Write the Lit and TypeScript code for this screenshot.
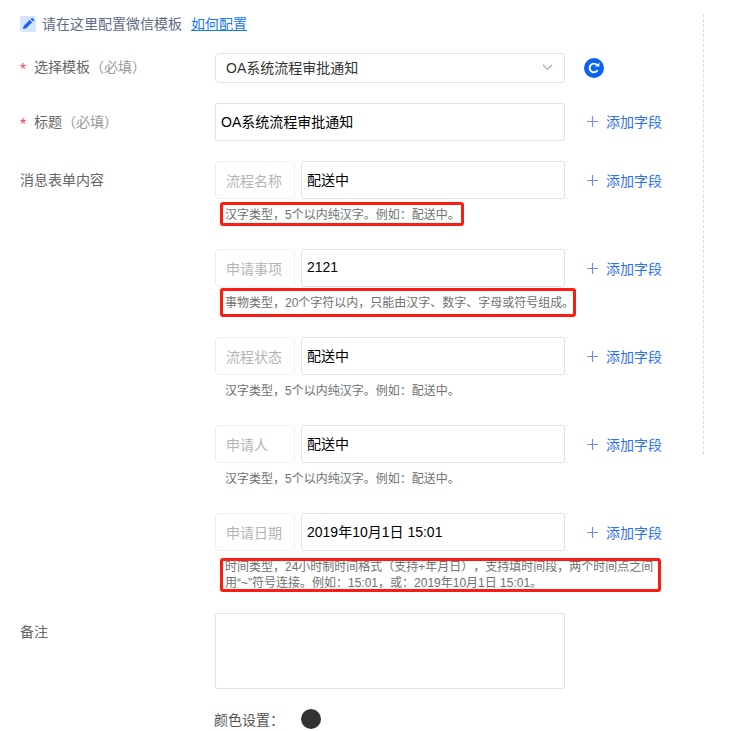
import { LitElement, html, css, svg } from "lit";
import { customElement } from "lit/decorators.js";

const HAN = "汉字类型，5个以内纯汉字。例如：配送中。";

const fields = [
  { name: "流程名称", value: "配送中", hint: HAN, mark: true },
  { name: "申请事项", value: "2121", hint: "事物类型，20个字符以内，只能由汉字、数字、字母或符号组成。", mark: true },
  { name: "流程状态", value: "配送中", hint: HAN, mark: false },
  { name: "申请人", value: "配送中", hint: HAN, mark: false },
  {
    name: "申请日期",
    value: "2019年10月1日 15:01",
    hint: "时间类型，24小时制时间格式（支持+年月日），支持填时间段，两个时间点之间用“~”符号连接。例如：15:01，或：2019年10月1日 15:01。",
    mark: true,
  },
];

@customElement("app-root")
export class AppRoot extends LitElement {
  static styles = css`
    :host {
      display: block;
      width: 744px;
      height: 731px;
      overflow: hidden;
      font-family: "Liberation Sans", "Noto Sans CJK SC", sans-serif;
      font-size: 14px;
      color: #666;
      background: #fff;
      text-spacing-trim: space-all;
    }
    .page {
      position: relative;
      padding: 15px 0 0 20px;
    }
    .divider {
      position: absolute;
      left: 703px;
      top: 14px;
      height: 440px;
      border-left: 1px dashed #dcdcdc;
    }
    .tip {
      display: flex;
      align-items: center;
      height: 18px;
      margin-bottom: 20px;
      color: #5f6b85;
    }
    .tip-text {
      padding-bottom: 2px;
    }
    .tip-icon {
      display: flex;
      width: 16px;
      height: 16px;
      margin-right: 6px;
      border-radius: 2px;
      background: #d5e4ff;
    }
    .tip a {
      margin-left: 9px;
      color: #1677ff;
      text-decoration: underline;
    }
    .row {
      display: grid;
      grid-template-columns: 195px 350px auto;
      margin-bottom: 20px;
    }
    .row.flush {
      margin-bottom: 0;
    }
    .label {
      line-height: 38px;
      color: #666;
    }
    .label.short {
      line-height: 28px;
    }
    .star {
      display: inline-block;
      width: 14px;
      font-size: 16px;
      line-height: 1;
      vertical-align: -3px;
      color: #f5475b;
    }
    .muted {
      color: #999;
    }
    .select {
      display: flex;
      align-items: center;
      justify-content: space-between;
      box-sizing: border-box;
      height: 30px;
      padding: 0 11px 2px 10px;
      border: 1px solid #e2e2e2;
      border-radius: 4px;
      color: #333;
    }
    .input {
      box-sizing: border-box;
      display: flex;
      align-items: center;
      height: 38px;
      padding: 0 0 2px 5px;
      border: 1px solid #e2e2e2;
      border-radius: 2px;
      color: #000;
    }
    .refresh {
      display: flex;
      align-items: center;
      margin-left: 19px;
    }
    .add {
      display: flex;
      align-items: center;
      box-sizing: border-box;
      height: 38px;
      margin-left: 22px;
      color: #2b6ff2;
    }
    .add.top {
      padding-bottom: 2px;
    }
    .add svg {
      margin-right: 8px;
    }
    .groups {
      display: flex;
      flex-direction: column;
      grid-column: 2 / 4;
    }
    .group {
      display: grid;
      grid-template-columns: 350px auto;
      margin-bottom: 26px;
    }
    .group:last-child {
      margin-bottom: 22px;
    }
    .pair {
      display: grid;
      grid-template-columns: 80px 264px;
      column-gap: 6px;
    }
    .prefix {
      box-sizing: border-box;
      display: flex;
      align-items: center;
      height: 38px;
      padding-left: 10px;
      border: 1px solid #efefef;
      border-radius: 4px;
      color: #b4b4b4;
    }
    .hint {
      position: relative;
      grid-column: 1 / -1;
      width: 432px;
      margin: 8px 0 0 10px;
      font-size: 12px;
      line-height: 16px;
      color: #707070;
    }
    .hint.mark::after {
      content: "";
      position: absolute;
      box-sizing: border-box;
      left: -5px;
      border: 3px solid #fb1d12;
      border-radius: 3px;
    }
    .hint.h0.mark::after {
      top: -5px;
      bottom: -3px;
      width: 244px;
    }
    .hint.h1.mark::after {
      top: -7px;
      bottom: -6px;
      width: 356px;
    }
    .hint.h4.mark::after {
      top: -1px;
      bottom: -1px;
      right: -4px;
    }
    .textarea {
      box-sizing: border-box;
      height: 76px;
      border: 1px solid #e2e2e2;
      border-radius: 2px;
    }
    .color {
      display: flex;
      align-items: center;
      height: 20px;
      margin-left: 194px;
      color: #555;
    }
    .color span {
      width: 87px;
    }
    .dot {
      width: 20px;
      height: 20px;
      border-radius: 50%;
      background: #333;
    }
  `;

  private plus() {
    return html`<svg width="11" height="11" viewBox="0 0 11 11">
      ${svg`<path d="M5.5 0v11M0 5.5h11" stroke="#7c88ff" stroke-width="1.2" fill="none"/>`}
    </svg>`;
  }

  render() {
    return html`
      <div class="page">
        <div class="divider"></div>

        <div class="tip">
          <span class="tip-icon">
            <svg width="16" height="16" viewBox="0 0 16 16">
              <path d="M3 13l.6-3L9.8 3.8l2.4 2.4L6 12.4 3 13zM10.6 3l.9-.9c.3-.3.7-.3 1 0l1.4 1.4c.3.3.3.7 0 1l-.9.9L10.6 3z" fill="#1a66f0"/>
            </svg>
          </span>
          <span class="tip-text">请在这里配置微信模板<a>如何配置</a></span>
        </div>

        <div class="row">
          <div class="label short"><span class="star">*</span>选择模板<span class="muted">（必填）</span></div>
          <div class="select">
            OA系统流程审批通知
            <svg width="11" height="7" viewBox="0 0 11 7">
              <path d="M1 1l4.5 4.5L10 1" fill="none" stroke="#aaa" stroke-width="1.2"/>
            </svg>
          </div>
          <div class="refresh">
            <svg width="20" height="20" viewBox="0 0 20 20">
              <circle cx="10" cy="10" r="10" fill="#0b62f5"/>
              <path d="M13.6 12.2A4.3 4.3 0 1 1 13 6.9" fill="none" stroke="#fff" stroke-width="1.9"/>
              <path d="M11 8.6h4.4V4.4z" fill="#fff"/>
            </svg>
          </div>
        </div>

        <div class="row">
          <div class="label"><span class="star">*</span>标题<span class="muted">（必填）</span></div>
          <div class="input">OA系统流程审批通知</div>
          <div class="add top">${this.plus()}添加字段</div>
        </div>

        <div class="row flush">
          <div class="label">消息表单内容</div>
          <div class="groups">
            ${fields.map(
              (f, i) => html`
                <div class="group">
                  <div class="pair">
                    <div class="prefix">${f.name}</div>
                    <div class="input">${f.value}</div>
                  </div>
                  <div class="add">${this.plus()}添加字段</div>
                  <div class="hint h${i} ${f.mark ? "mark" : ""}">${f.hint}</div>
                </div>
              `
            )}
          </div>
        </div>

        <div class="row">
          <div class="label">备注</div>
          <div class="textarea"></div>
        </div>

        <div class="color"><span>颜色设置：</span><div class="dot"></div></div>
      </div>
    `;
  }
}
